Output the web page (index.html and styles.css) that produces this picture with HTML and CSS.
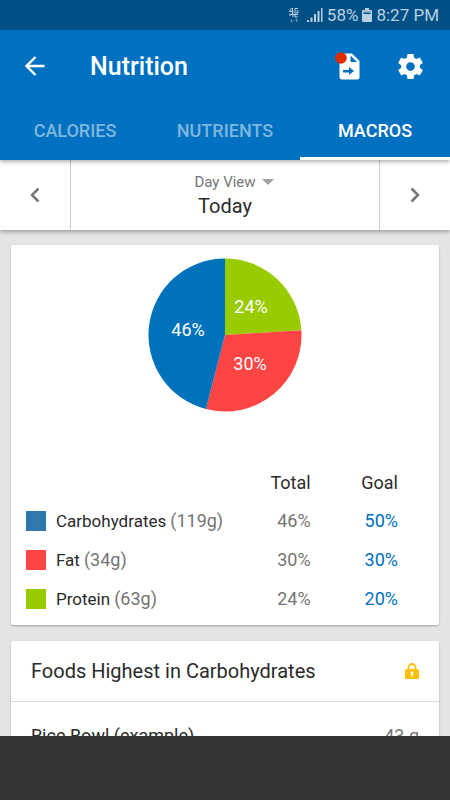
FILE: index.html
```
<!DOCTYPE html>
<html lang="en">
  <head>
    <meta charset="UTF-8" />
    <meta name="viewport" content="width=device-width, initial-scale=1.0" />
    <title>Nutrition</title>
    <link rel="stylesheet" href="styles.css">
  </head>

  <body>
    <div class="app">
      <div class="status-bar">
        <svg class="icon-network" viewBox="0 0 10 16" width="10" height="16">
          <path d="M2.500 1 L0.500 4.500 H4.500 M3.500 1 V7 M9 1.500 H6 V6 H9 V4 H7.500" />
          <path d="M1 9 V6.500 M4 6 V10 M6 7.500 V10 H9 M1 7.500 H9" />
          <path class="faint" d="M2.500 12 V15 M1 13.500 L2.500 15 L4 13.500 M7.500 15 V12 M6 13.500 L7.500 12 L9 13.500" />
        </svg>
        <svg class="icon-signal" viewBox="0 0 16 16" width="16" height="16">
          <path d="M0 13 H2 V15 H0 Z M3.500 10.500 H5.500 V15 H3.500 Z M7 7 H9 V15 H7 Z M10.500 4 H12.500 V15 H10.500 Z M14 1 H15.500 V15 H14 Z" />
        </svg>
        <span>58%</span>
        <svg class="icon-battery" viewBox="0 0 10 16" width="10" height="16">
          <path class="faint" d="M3 1 H7 V3 H9 Q10 3 10 4 V6 H0 V4 Q0 3 1 3 H3 Z" />
          <path d="M3 1 H7 V3 H9 Q10 3 10 4 V14 Q10 15 9 15 H1 Q0 15 0 14 V4 Q0 3 1 3 H3 Z M1.500 4.500 V7 H8.500 V4.500 Z" fill-rule="evenodd" />
        </svg>
        <span>8:27 PM</span>
      </div>

      <header class="header">
        <div class="toolbar">
          <button class="icon-button" aria-label="Back">
            <svg viewBox="0 0 20 20" width="20" height="20">
              <path d="M19.500 10 H1.500 M10.500 1 L1.500 10 L10.500 19" fill="none" stroke="#fff" stroke-width="2.400" />
            </svg>
          </button>
          <h1>Nutrition</h1>
          <button class="icon-button" aria-label="Export">
            <svg viewBox="0 0 26 28" width="26" height="28">
              <path d="M7 1.500 H17 L24.500 9 V25 Q24.500 27.500 22 27.500 H7 Q4.500 27.500 4.500 25 V4 Q4.500 1.500 7 1.500 Z" fill="#fff" />
              <path d="M15.500 3.500 V10 H22 Z" fill="#0070c0" />
              <path d="M8 18 H14 V15 L19 19 L14 23 V20.500 H8 Z" fill="#0070c0" />
              <circle cx="6" cy="6" r="5.800" fill="#dd2c00" />
            </svg>
          </button>
          <button class="icon-button" aria-label="Settings">
            <svg viewBox="2 2 20 20" width="25" height="25">
              <path fill="#fff" d="M19.430 12.980c.04-.32.07-.64.07-.98s-.03-.66-.07-.98l2.110-1.650c.19-.15.24-.42.12-.64l-2-3.460c-.12-.22-.39-.3-.61-.22l-2.490 1c-.52-.4-1.080-.73-1.690-.98l-.38-2.650C14.460 2.180 14.250 2 14 2h-4c-.25 0-.46.18-.49.42l-.38 2.650c-.61.25-1.170.59-1.690.98l-2.490-1c-.23-.09-.49 0-.61.22l-2 3.460c-.13.22-.07.49.12.64l2.110 1.650c-.04.32-.07.65-.07.98s.03.66.07.98l-2.110 1.650c-.19.15-.24.42-.12.64l2 3.460c.12.22.39.3.61.22l2.490-1c.52.4 1.080.73 1.690.98l.38 2.650c.03.24.24.42.49.42h4c.25 0 .46-.18.49-.42l.38-2.650c.61-.25 1.170-.59 1.690-.98l2.490 1c.23.09.49 0 .61-.22l2-3.460c.12-.22.07-.49-.12-.64l-2.110-1.650zM12 15.500c-1.930 0-3.500-1.570-3.500-3.500s1.570-3.500 3.500-3.500 3.500 1.570 3.500 3.500-1.570 3.500-3.500 3.500z" />
            </svg>
          </button>
        </div>
        <nav class="tabs">
          <a href="#calories">CALORIES</a>
          <a href="#nutrients">NUTRIENTS</a>
          <a href="#macros" class="active">MACROS</a>
        </nav>
      </header>

      <div class="date-bar">
        <button class="date-arrow" aria-label="Previous day">
          <svg viewBox="0 0 10 16" width="10" height="16">
            <path d="M8.500 1.500 L2 8 L8.500 14.500" />
          </svg>
        </button>
        <button class="date-view">
          <span class="view-name">Day View
            <svg viewBox="0 0 12 6" width="12" height="6"><path d="M0 0 H12 L6 6 Z" fill="#a0a0a0" /></svg>
          </span>
          <span class="view-date">Today</span>
        </button>
        <button class="date-arrow" aria-label="Next day">
          <svg viewBox="0 0 10 16" width="10" height="16">
            <path d="M1.500 1.500 L8 8 L1.500 14.500" />
          </svg>
        </button>
      </div>

      <main class="content">
        <section class="card macros">
          <svg class="pie" viewBox="0 0 154 154" width="154" height="154">
            <path d="M77 77 V0.500 A76.500 76.500 0 0 1 153.350 72.200 Z" fill="#99cc00" />
            <path d="M77 77 L153.350 72.200 A76.500 76.500 0 0 1 57.970 151.100 Z" fill="#ff4444" />
            <path d="M77 77 L57.970 151.100 A76.500 76.500 0 0 1 77 0.500 Z" fill="#0072bc" />
            <text x="103" y="55">24%</text>
            <text x="102" y="112">30%</text>
            <text x="40" y="78">46%</text>
          </svg>

          <table class="legend">
            <thead>
              <tr>
                <th></th>
                <th class="value">Total</th>
                <th class="value">Goal</th>
              </tr>
            </thead>
            <tbody>
              <tr>
                <td><div class="macro"><i class="swatch carbs"></i>Carbohydrates<span>(119g)</span></div></td>
                <td class="value">46%</td>
                <td class="value goal">50%</td>
              </tr>
              <tr>
                <td><div class="macro"><i class="swatch fat"></i>Fat<span>(34g)</span></div></td>
                <td class="value">30%</td>
                <td class="value goal">30%</td>
              </tr>
              <tr>
                <td><div class="macro"><i class="swatch protein"></i>Protein<span>(63g)</span></div></td>
                <td class="value">24%</td>
                <td class="value goal">20%</td>
              </tr>
            </tbody>
          </table>
        </section>

        <section class="card foods">
          <div class="foods-title">
            <h2>Foods Highest in Carbohydrates</h2>
            <svg viewBox="0 0 14 16" width="14" height="16">
              <path d="M3.500 7 V4.500 A3.500 3.500 0 0 1 10.500 4.500 V7" fill="none" stroke="#ffc107" stroke-width="1.800" />
              <rect x="0" y="6" width="14" height="10" rx="1.500" fill="#ffc107" />
              <path d="M7 8.500 A1.500 1.500 0 0 1 7.800 11.200 V13.500 H6.200 V11.200 A1.500 1.500 0 0 1 7 8.500 Z" fill="#fff" />
            </svg>
          </div>
          <div class="food">
            <span>Rice Bowl (example)</span>
            <span class="amount">43 g</span>
          </div>
        </section>
      </main>

      <footer class="bottom-bar"></footer>
    </div>
  </body>
</html>
```
FILE: styles.css
```
* {
  box-sizing: border-box;
}

body {
  margin: 0;
  font-family: Roboto, sans-serif;
  font-size: 18px;
  color: #2b2b2b;
  background-color: #e4e4e4;
}

button {
  padding: 0;
  border: none;
  background: none;
  font-family: inherit;
  cursor: pointer;
}

svg {
  display: block;
  flex-shrink: 0;
}

.app {
  display: flex;
  flex-direction: column;
  height: 100vh;
  overflow: hidden;
}

/* Status bar */
.status-bar {
  display: flex;
  align-items: center;
  justify-content: flex-end;
  gap: 4px;
  height: 30px;
  padding-right: 11px;
  background-color: #005086;
  color: #b8d0e1;
  font-size: 17px;
  flex-shrink: 0;
}

.status-bar svg {
  fill: #b8d0e1;
}

.status-bar .icon-network {
  fill: none;
  stroke: #b8d0e1;
  margin-right: 4px;
}

.faint {
  opacity: 0.5;
}

/* Header */
.header {
  position: relative;
  z-index: 2;
  background-color: #0070c0;
  box-shadow: 0 2px 4px rgba(0, 0, 0, 0.3);
  flex-shrink: 0;
}

.toolbar {
  display: flex;
  align-items: center;
  height: 72px;
  padding: 0 15px 0 10px;
}

.toolbar h1 {
  flex: 1;
  margin: 0;
  padding-left: 30px;
  font-size: 25px;
  font-weight: 500;
  color: #fff;
}

.icon-button {
  display: flex;
  align-items: center;
  justify-content: center;
  width: 50px;
  height: 50px;
}

.icon-button + .icon-button {
  margin-left: 12px;
}

.tabs {
  display: flex;
  height: 58px;
}

.tabs a {
  flex: 1;
  padding-top: 3px;
  border-bottom: 3px solid transparent;
  line-height: 52px;
  text-align: center;
  font-weight: 500;
  color: #7fb7df;
  text-decoration: none;
}

.tabs .active {
  color: #fff;
  border-color: #fff;
}

/* Day picker */
.date-bar {
  position: relative;
  z-index: 1;
  display: flex;
  height: 70px;
  background-color: #fff;
  box-shadow: 0 2px 4px rgba(0, 0, 0, 0.3);
  flex-shrink: 0;
}

.date-arrow {
  display: flex;
  align-items: center;
  justify-content: center;
  width: 70px;
}

.date-arrow path {
  fill: none;
  stroke: #757575;
  stroke-width: 2.5;
}

.date-view {
  flex: 1;
  display: flex;
  flex-direction: column;
  align-items: center;
  justify-content: center;
  border-left: 1px solid #ccc;
  border-right: 1px solid #ccc;
}

.view-name {
  display: flex;
  align-items: center;
  gap: 6px;
  padding-left: 18px;
  font-size: 15px;
  line-height: 22px;
  color: #757575;
}

.view-date {
  font-size: 20px;
  line-height: 26px;
  color: #2b2b2b;
}

/* Cards */
.content {
  flex: 1;
  min-height: 0;
  overflow: hidden;
  padding: 15px 11px 0;
}

.card {
  margin-bottom: 16px;
  background-color: #fff;
  border-radius: 2px;
  box-shadow: 0 1px 2px rgba(0, 0, 0, 0.3);
}

.macros {
  padding: 13px 15px 7px;
}

.pie {
  margin: 0 auto 52px;
}

.pie text {
  fill: #fff;
  text-anchor: middle;
}

.legend {
  width: 100%;
  border-collapse: collapse;
}

.legend th,
.legend td {
  height: 37px;
  padding: 0;
  font-weight: 400;
}

.legend td {
  height: 39px;
}

.legend .value {
  width: 89px;
  text-align: right;
}

.legend .value:last-child {
  width: 115px;
  padding-right: 26px;
}

.legend td.value {
  color: #757575;
}

.legend td.goal {
  color: #0070c0;
}

.macro {
  display: flex;
  align-items: center;
  font-size: 17px;
}

.macro span {
  margin-left: 4px;
  font-size: 18px;
  color: #757575;
}

.swatch {
  width: 20px;
  height: 20px;
  margin-right: 10px;
}

.carbs {
  background-color: #2f78ad;
}

.fat {
  background-color: #ff4444;
}

.protein {
  background-color: #99cc00;
}

.foods-title,
.food {
  display: flex;
  align-items: center;
  justify-content: space-between;
  padding: 0 20px;
}

.foods-title {
  height: 61px;
  border-bottom: 1px solid #ddd;
}

.foods-title h2 {
  margin: 0;
  font-size: 20px;
  font-weight: 400;
}

.food {
  height: 66px;
}

.amount {
  color: #757575;
}

.bottom-bar {
  height: 64px;
  background-color: #333;
  flex-shrink: 0;
}
```
